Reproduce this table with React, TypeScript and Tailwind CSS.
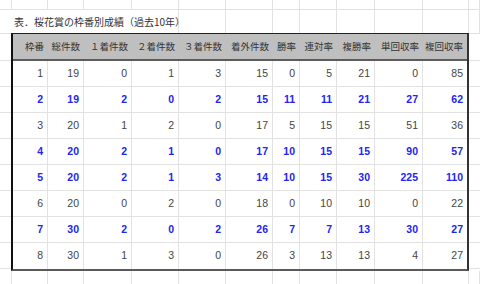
import React from "react";

const colW = [35, 36, 48, 47, 47, 47, 27, 37, 38, 48, 44];
const headers = ["枠番", "総件数", "１着件数", "２着件数", "３着件数", "着外件数", "勝率", "連対率", "複勝率", "単回収率", "複回収率"];
const rows: { v: number[]; b: boolean }[] = [
  { v: [1, 19, 0, 1, 3, 15, 0, 5, 21, 0, 85], b: false },
  { v: [2, 19, 2, 0, 2, 15, 11, 11, 21, 27, 62], b: true },
  { v: [3, 20, 1, 2, 0, 17, 5, 15, 15, 51, 36], b: false },
  { v: [4, 20, 2, 1, 0, 17, 10, 15, 15, 90, 57], b: true },
  { v: [5, 20, 2, 1, 3, 14, 10, 15, 30, 225, 110], b: true },
  { v: [6, 20, 0, 2, 0, 18, 0, 10, 10, 0, 22], b: false },
  { v: [7, 30, 2, 0, 2, 26, 7, 7, 13, 30, 27], b: true },
  { v: [8, 30, 1, 3, 0, 26, 3, 13, 13, 4, 27], b: false },
];

const sheetCols = [12, 36, 36, 48, 47, 47, 47, 27, 37, 38, 48, 46, 11];

function GridRow({ h, border = true }: { h: number; border?: boolean }) {
  return (
    <div className={"flex shrink-0 " + (border ? "border-b border-[#e2e2e2]" : "")} style={{ height: h }}>
      {sheetCols.map((w, i) => (
        <div key={i} className="border-r border-[#e2e2e2] shrink-0" style={{ width: w }} />
      ))}
    </div>
  );
}

export default function App() {
  const jp = { fontFamily: '"Noto Sans CJK JP", "Noto Sans", sans-serif' };
  const num = { fontFamily: '"Liberation Sans", Arial, sans-serif' };
  return (
    <div className="w-[480px] h-[284px] overflow-hidden bg-white flex flex-col">
      <GridRow h={10} />
      <div className="flex h-[23px] shrink-0">
        <div className="w-[12px] shrink-0" />
        <div className="w-[167px] shrink-0 border-r border-[#e2e2e2] flex items-center">
          <span className="whitespace-nowrap text-[10px] text-[#333] pl-[2px]" style={jp}>
            表．桜花賞の枠番別成績（過去10年）
          </span>
        </div>
        {[47, 47, 27, 37, 38, 48, 46, 11].map((w, i) => (
          <div key={i} className="border-r border-[#e2e2e2] shrink-0" style={{ width: w }} />
        ))}
      </div>
      <div className="flex shrink-0">
        <div className="w-[11px] shrink-0 flex flex-col">
          <div className="h-[28px] shrink-0 border-t border-b border-[#e2e2e2]" />
          {rows.map((_, i) => (
            <div key={i} className="h-[26px] shrink-0 border-b border-[#e2e2e2]" />
          ))}
        </div>
        <div className="w-[458px] shrink-0 border-t border-t-[#222] border-l-2 border-l-[#111] border-r-2 border-r-[#333] border-b-2 border-b-[#5a5a5a] flex flex-col">
          <div className="h-[27px] shrink-0 bg-[#bfbfbf] border-b-2 border-[#5c5c5c] flex">
            {headers.map((t, i) => (
              <div
                key={i}
                className="shrink-0 flex items-center justify-end pr-[4px] text-[9.5px] text-[#333] whitespace-nowrap"
                style={{ width: colW[i], ...jp }}
              >
                {t}
              </div>
            ))}
          </div>
          {rows.map((r, ri) => (
            <div
              key={ri}
              className={"h-[26px] shrink-0 flex " + (ri < rows.length - 1 ? "border-b border-[#e2e2e2]" : "")}
            >
              {r.v.map((v, ci) => (
                <div
                  key={ci}
                  className={
                    "shrink-0 flex items-center justify-end pr-[4px] text-[10.5px] " +
                    (ci < colW.length - 1 ? "border-r border-[#e2e2e2] " : "") +
                    (r.b ? "font-bold text-[#2424f0]" : "text-[#444]")
                  }
                  style={{ width: colW[ci], ...num }}
                >
                  {v}
                </div>
              ))}
            </div>
          ))}
        </div>
        <div className="w-[11px] shrink-0 flex flex-col">
          <div className="h-[28px] shrink-0 border-t border-b border-[#e2e2e2]" />
          {rows.map((_, i) => (
            <div key={i} className="h-[26px] shrink-0 border-b border-[#e2e2e2]" />
          ))}
        </div>
      </div>
      <GridRow h={30} border={false} />
    </div>
  );
}
